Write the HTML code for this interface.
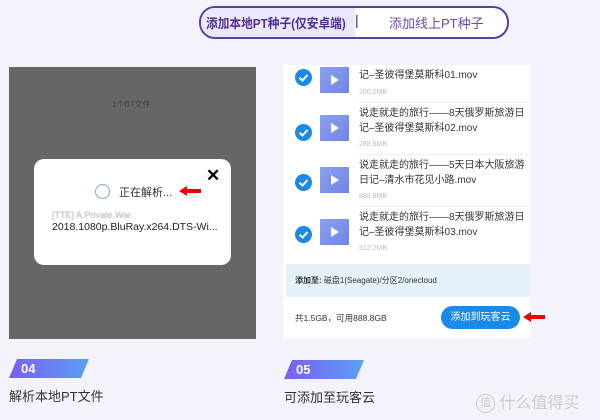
<!DOCTYPE html>
<html><head><meta charset="utf-8"><style>
*{margin:0;padding:0;box-sizing:border-box}
body{width:600px;height:420px;background:#f4f3fc;font-family:"Liberation Sans","Noto Sans CJK SC",sans-serif;position:relative;overflow:hidden}
.a{position:absolute}
.pill{left:199px;top:6px;width:310px;height:33px;border:2px solid #5b3f9e;border-radius:16px;overflow:hidden;background:#fff}
.pl{left:0;top:0;width:154px;height:29px;background:#ece8fb}
.gray{left:9px;top:67px;width:247px;height:272px;background:#666}
.dlg{left:34px;top:159px;width:197px;height:106px;background:#fff;border-radius:10px}
.rp{left:283px;top:65px;width:247px;height:273px;background:#fff}
.chk{width:17px;height:17px}
.th{width:29px;height:26px;background:linear-gradient(135deg,#8aa2ef,#6f84e6)}
.th:after{content:"";position:absolute;left:11px;top:8px;border-left:8px solid #fff;border-top:5px solid transparent;border-bottom:5px solid transparent}
.t{font-size:10px;color:#333;line-height:15px}
.s{font-size:7px;color:#bbb}
.tag{width:80px;height:19px;background:linear-gradient(90deg,#7b5df0,#5aa0f5);clip-path:polygon(8px 0,100% 0,calc(100% - 8px) 100%,0 100%);color:#fff;font-weight:bold;font-size:13px;padding-left:12px;line-height:19px}
.lab{font-size:13px;color:#333}
.arr{width:24px;height:12px}
</style></head><body>
<div class="a pill"><div class="a pl"></div>
<div class="a" style="left:5px;top:5px;font-size:13px;transform:scaleX(0.9);transform-origin:0 0;font-weight:bold;color:#4f2f9a;white-space:nowrap">添加本地PT种子(仅安卓端)</div>
<div class="a" style="left:154px;top:4px;font-size:14px;color:#333">|</div>
<div class="a" style="left:188px;top:5px;font-size:13px;color:#6a4ba8">添加线上PT种子</div></div>

<div class="a gray"></div>
<div class="a" style="left:112px;top:99px;font-size:8px;color:#444">1个BT文件</div>
<div class="a dlg"></div>
<div class="a" style="left:95px;top:184px;width:15px;height:15px;border-radius:50%;border:1.5px solid #7aa8d8"></div>
<div class="a" style="left:119px;top:184px;font-size:11px;color:#333">正在解析...</div>
<svg class="a arr" style="left:178px;top:185px" viewBox="0 0 24 12"><path d="M1 6L9 1V4H23V8H9V11Z" fill="#e00"/></svg>
<div class="a" style="left:206px;top:166px;font-size:17px;font-weight:bold;color:#000">✕</div>
<div class="a" style="left:52px;top:210px;font-size:9px;color:#aaa;filter:blur(.6px)">[TTE] A.Private.War.</div>
<div class="a" style="left:52px;top:221px;font-size:10.5px;color:#222">2018.1080p.BluRay.x264.DTS-Wi...</div>

<div class="a rp"></div>
<svg class="a chk" style="left:295px;top:69px" viewBox="0 0 17 17"><circle cx="8.5" cy="8.5" r="8.5" fill="#1a8ae8"/><path d="M4.5 8.8L7.5 11.5L12.5 6" stroke="#fff" stroke-width="2" fill="none"/></svg>
<div class="a th" style="left:320px;top:67px"></div>
<div class="a t" style="left:359px;top:68px">记–圣彼得堡莫斯科01.mov</div>
<div class="a s" style="left:359px;top:89px">260.2MB</div>
<div class="a" style="left:359px;top:102px;width:170px;height:1px;background:#eee"></div>

<svg class="a chk" style="left:295px;top:124px" viewBox="0 0 17 17"><circle cx="8.5" cy="8.5" r="8.5" fill="#1a8ae8"/><path d="M4.5 8.8L7.5 11.5L12.5 6" stroke="#fff" stroke-width="2" fill="none"/></svg>
<div class="a th" style="left:320px;top:115px"></div>
<div class="a t" style="left:359px;top:106px">说走就走的旅行——8天俄罗斯旅游日<br>记–圣彼得堡莫斯科02.mov</div>
<div class="a s" style="left:359px;top:141px">288.6MB</div>
<div class="a" style="left:359px;top:154px;width:170px;height:1px;background:#eee"></div>

<svg class="a chk" style="left:295px;top:174px" viewBox="0 0 17 17"><circle cx="8.5" cy="8.5" r="8.5" fill="#1a8ae8"/><path d="M4.5 8.8L7.5 11.5L12.5 6" stroke="#fff" stroke-width="2" fill="none"/></svg>
<div class="a th" style="left:320px;top:167px"></div>
<div class="a t" style="left:359px;top:158px">说走就走的旅行——5天日本大阪旅游<br>日记–清水市花见小路.mov</div>
<div class="a s" style="left:359px;top:193px">888.8MB</div>
<div class="a" style="left:359px;top:206px;width:170px;height:1px;background:#eee"></div>

<svg class="a chk" style="left:295px;top:226px" viewBox="0 0 17 17"><circle cx="8.5" cy="8.5" r="8.5" fill="#1a8ae8"/><path d="M4.5 8.8L7.5 11.5L12.5 6" stroke="#fff" stroke-width="2" fill="none"/></svg>
<div class="a th" style="left:320px;top:219px"></div>
<div class="a t" style="left:359px;top:210px">说走就走的旅行——8天俄罗斯旅游日<br>记–圣彼得堡莫斯科03.mov</div>
<div class="a s" style="left:359px;top:245px">512.2MB</div>

<div class="a" style="left:286px;top:264px;width:244px;height:33px;background:#e5f2fb"></div>
<div class="a" style="left:295px;top:275px;font-size:8px;color:#333"><b>添加至:</b> 磁盘1(Seagate)/分区2/onecloud</div>
<div class="a" style="left:295px;top:312px;font-size:8.5px;color:#333">共1.5GB，可用888.8GB</div>
<div class="a" style="left:441px;top:306px;width:79px;height:23px;border-radius:12px;background:#1a8ae8;color:#fff;font-size:10px;text-align:center;line-height:23px">添加到玩客云</div>
<svg class="a arr" style="left:522px;top:311px" viewBox="0 0 24 12"><path d="M1 6L9 1V4H23V8H9V11Z" fill="#e00"/></svg>

<div class="a tag" style="left:9px;top:359px">04</div>
<div class="a lab" style="left:9px;top:386px">解析本地PT文件</div>
<div class="a tag" style="left:284px;top:360px">05</div>
<div class="a lab" style="left:284px;top:387px">可添加至玩客云</div>
<div class="a" style="left:476px;top:389px;font-size:16px;color:#ccc"><span style="display:inline-block;width:19px;height:19px;border:1.5px solid #ccc;border-radius:50%;font-size:11px;text-align:center;line-height:16px;vertical-align:2px">值</span> 什么值得买</div>
</body></html>
